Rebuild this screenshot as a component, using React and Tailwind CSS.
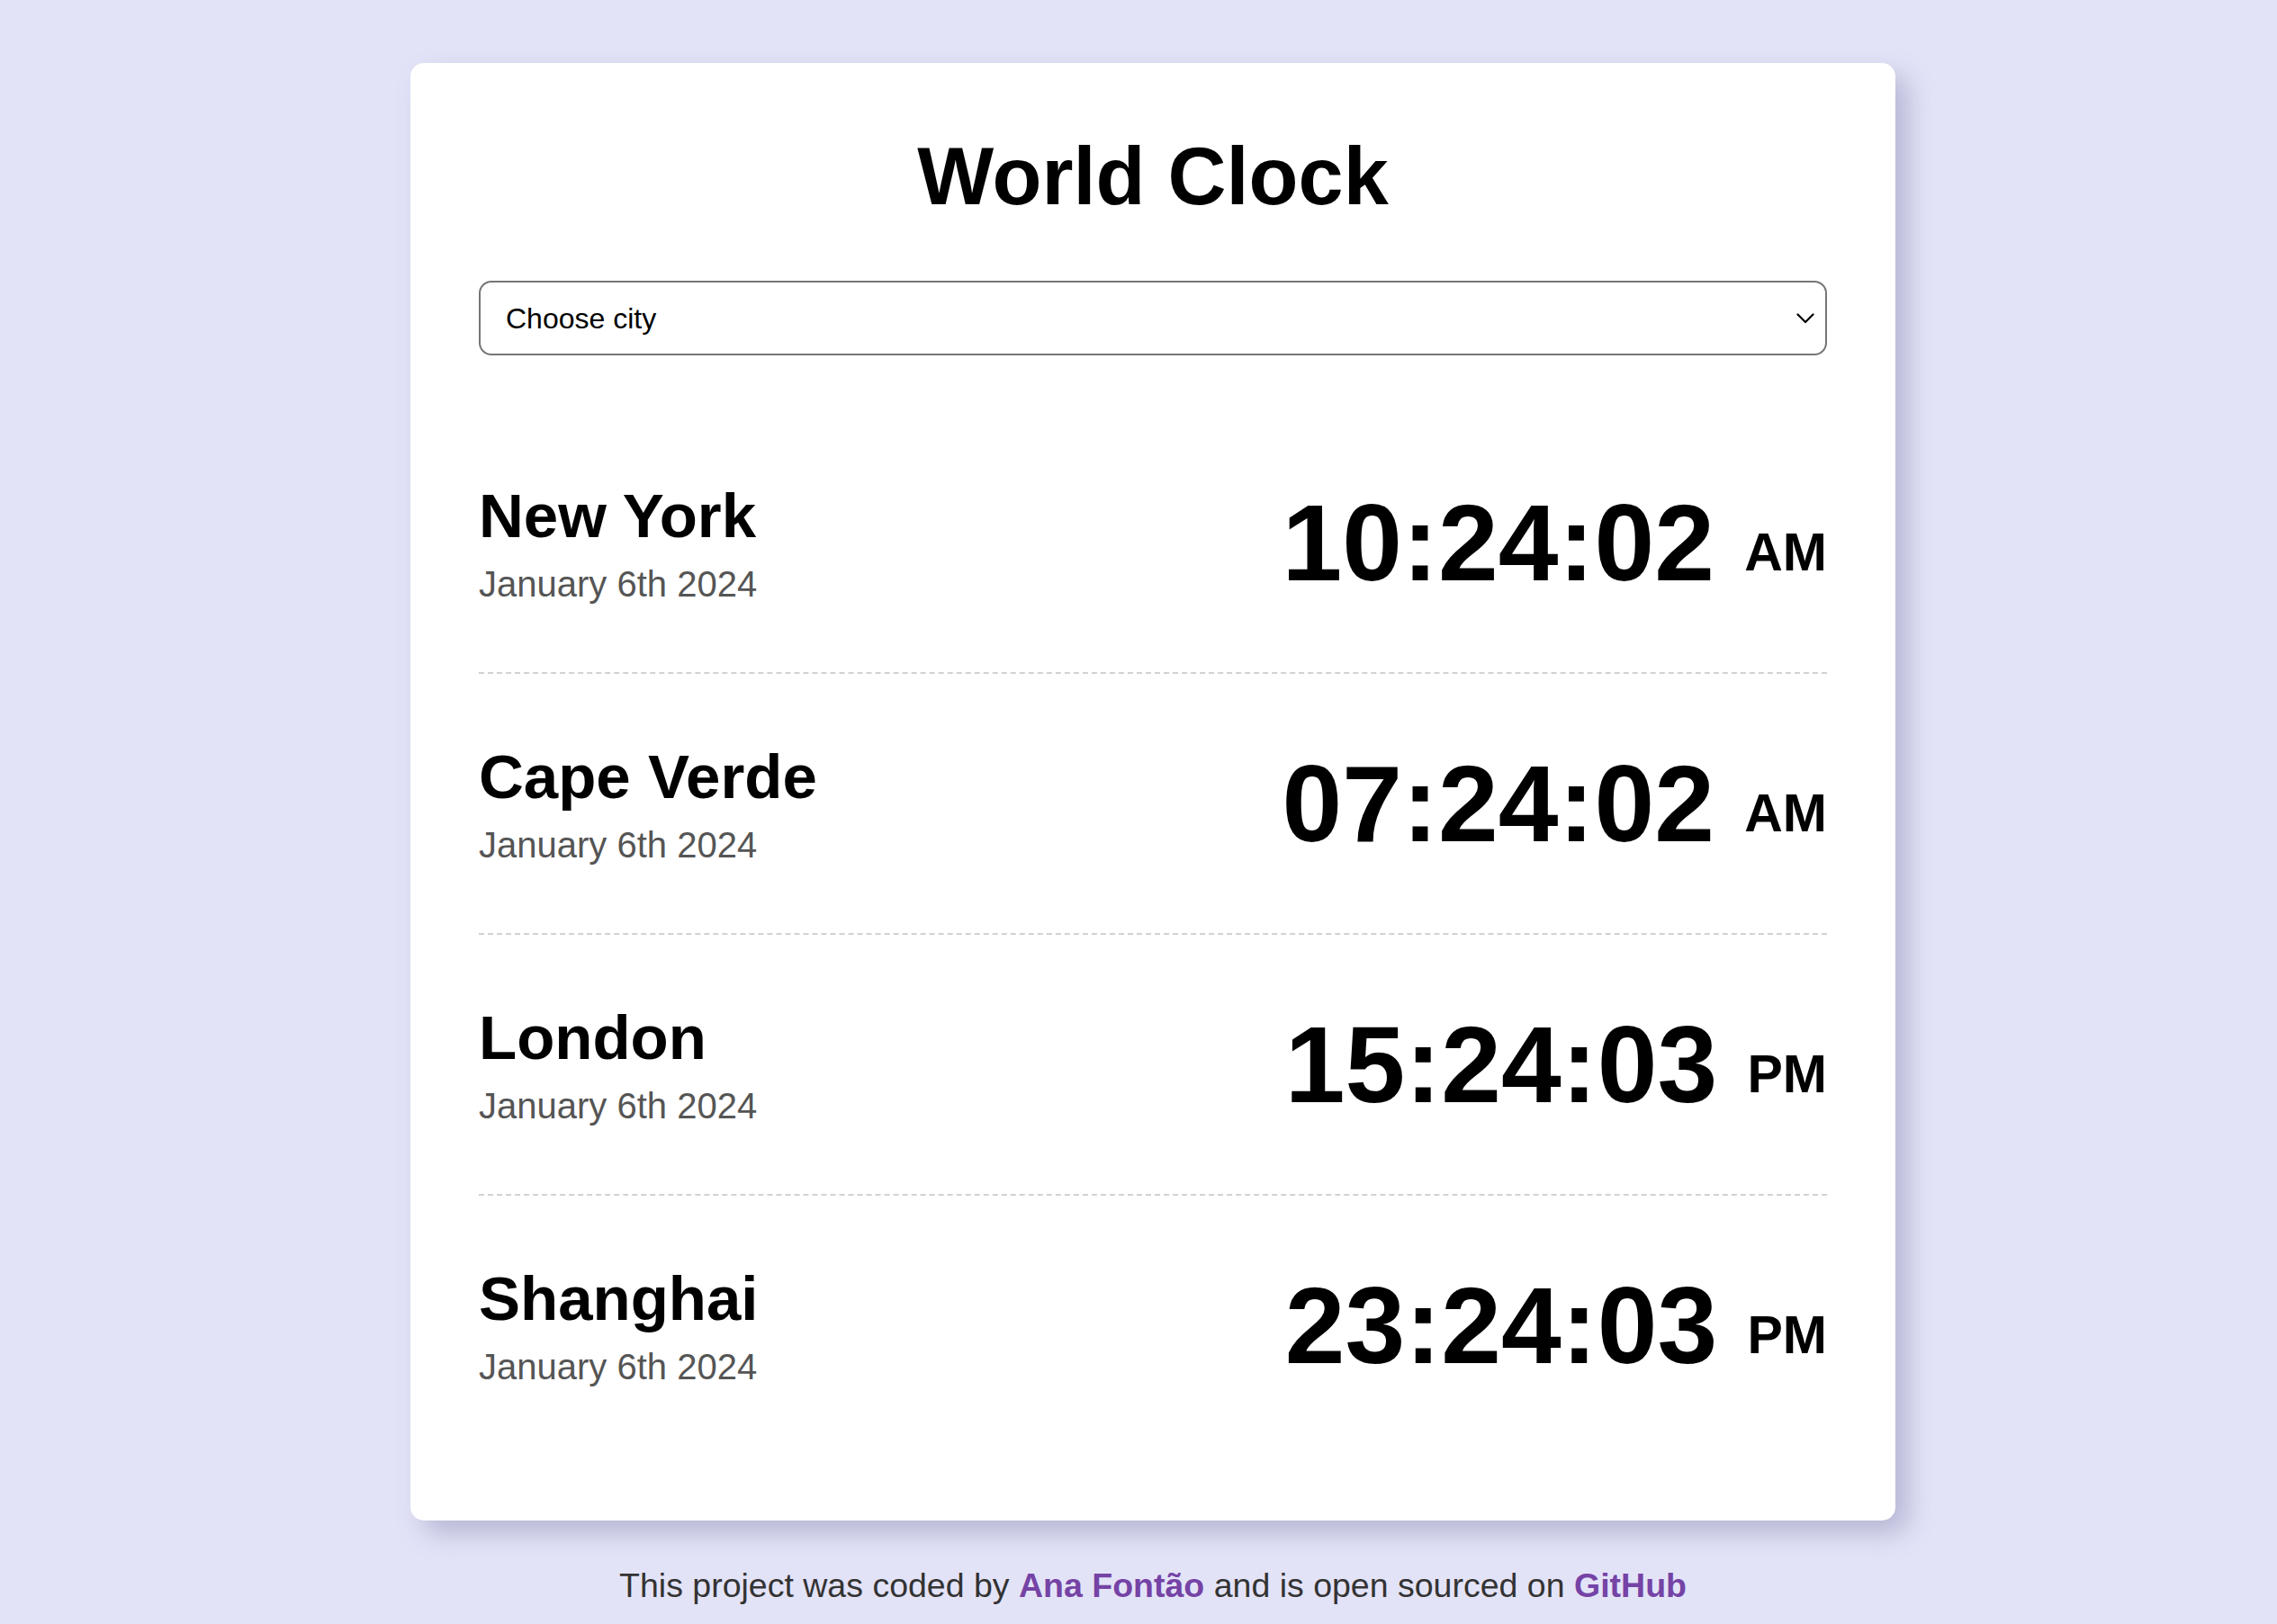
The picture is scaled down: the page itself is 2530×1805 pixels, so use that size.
const cities = [
  { name: 'New York', date: 'January 6th 2024', time: '10:24:02', period: 'AM' },
  { name: 'Cape Verde', date: 'January 6th 2024', time: '07:24:02', period: 'AM' },
  { name: 'London', date: 'January 6th 2024', time: '15:24:03', period: 'PM' },
  { name: 'Shanghai', date: 'January 6th 2024', time: '23:24:03', period: 'PM' },
];

const CityRow = ({ city }) => (
  <div className="flex items-center justify-between py-[72px] border-b-2 border-dashed border-[#d2d2d2] last:border-b-0">
    <div>
      <h2 className="text-[69px] leading-[1.2] font-bold text-black">{city.name}</h2>
      <div className="mt-[10px] text-[40px] leading-[1.2] text-[#555555]">{city.date}</div>
    </div>
    <div className="text-[120px] leading-[1.2] font-bold text-black whitespace-nowrap">
      {city.time} <span className="text-[59px] align-[11px]">{city.period}</span>
    </div>
  </div>
);

const App = () => {
  return (
    <div
      className="min-h-screen bg-[#e3e3f8] pl-[32px] pt-[70px] pb-[20px] flex flex-col items-center"
      style={{ fontFamily: '"Liberation Sans", Arial, sans-serif' }}
    >
      <div className="w-[1650px] bg-white rounded-[15px] px-[76px] pt-[72px] pb-[73px] shadow-[14px_14px_30px_rgba(70,70,120,0.28)]">
        <h1 className="text-center text-[90px] leading-[1.2] font-bold text-black">World Clock</h1>
        <div className="relative mt-[62px]">
          <select
            className="w-full h-[83px] appearance-none bg-white border-2 border-[#767676] rounded-[14px] pl-[28px] text-[32px] text-black outline-none"
            style={{ fontFamily: '"Liberation Sans", Arial, sans-serif' }}
            defaultValue=""
          >
            <option value="">Choose city</option>
            <option value="paris">Paris</option>
            <option value="tokyo">Tokyo</option>
            <option value="sydney">Sydney</option>
          </select>
          <svg
            className="pointer-events-none absolute right-[14px] top-1/2 -translate-y-1/2"
            width="20"
            height="12"
            viewBox="0 0 20 12"
            fill="none"
            stroke="#000"
            strokeWidth="2.2"
            strokeLinecap="round"
            strokeLinejoin="round"
          >
            <path d="M1.5 1.5 L10 10 L18.5 1.5" />
          </svg>
        </div>
        <div className="mt-[64px]">
          {cities.map((city) => (
            <CityRow key={city.name} city={city} />
          ))}
        </div>
      </div>
      <p className="mt-[50px] text-[37.5px] leading-[1.2] text-[#333333]">
        This project was coded by{' '}
        <a href="#" className="font-bold text-[#7543a5]">Ana Fontão</a> and is open sourced on{' '}
        <a href="#" className="font-bold text-[#7543a5]">GitHub</a>
      </p>
    </div>
  );
};

export default App;
